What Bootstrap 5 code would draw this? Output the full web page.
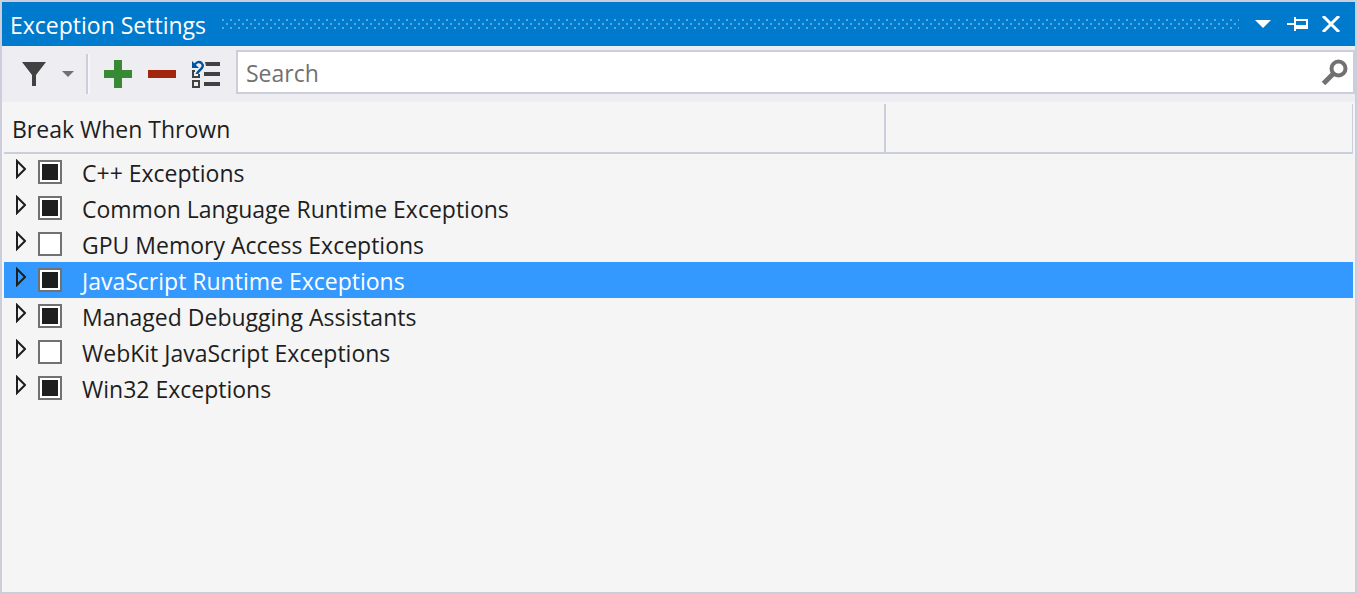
<!DOCTYPE html>
<html lang="en">
<head>
<meta charset="utf-8">
<meta name="viewport" content="width=device-width, initial-scale=1">
<title>Exception Settings</title>
<link href="https://cdn.jsdelivr.net/npm/bootstrap@5.3.0/dist/css/bootstrap.min.css" rel="stylesheet">
<style>
  :root { --line: #cccedb; --ink: #1e1e1e; }
  body { font-family: "Open Sans", "Noto Sans", sans-serif; font-size: 23px; line-height: 36px; color: var(--ink); background: #f5f5f5; }
  svg { display: block; }
  .tool-window { border: 2px solid var(--line); }
  .title-bar { background: #007acc; height: 44px; padding: 0 14px 0 8px; }
  .title-bar h1 { font-size: 23px; line-height: 36px; font-weight: 400; padding-top: 2px; }
  .grip {
    height: 10px; margin: 0 16px;
    --dots: linear-gradient(90deg, #59a9de 2px, transparent 2px);
    background: var(--dots) 0 0 / 8px 2px repeat-x, var(--dots) 4px 4px / 8px 2px repeat-x, var(--dots) 0 8px / 8px 2px repeat-x;
  }
  .icon-btn { border: 0; padding: 0; background: none; }
  .close-btn { margin-left: 12px; }
  .tool-bar { background: #eeeef2; height: 56px; padding: 4px 0 8px 20px; }
  .tool-rule { width: 4px; height: 40px; border-left: 2px solid var(--line); border-right: 2px solid #f6f6f8; margin: 0 14px 0 12px; }
  .search-box { border: 2px solid var(--line); background: #fff; height: 44px; padding: 0 5px 0 8px; margin-left: 16px; }
  .search-box input { border: 0; outline: 0; min-width: 0; padding: 2px 0 0; background: none; color: var(--ink); line-height: 36px; }
  .search-box input::placeholder { color: #717171; opacity: 1; }
  .tree { table-layout: fixed; margin: 0 2px; width: calc(100% - 4px); border-collapse: separate; border-spacing: 0; }
  .tree th { height: 52px; font-weight: 400; padding: 3px 8px 0; border-bottom: 2px solid var(--line); background: linear-gradient(var(--line), var(--line)) right 2px / 2px 50px no-repeat; }
  .tree th:first-child { width: 65.4%; }
  .tree th + th { background-position: right 2px; background-size: 1px 50px; }
  .tree td { padding: 0; }
  .tree tr.selected td { background: #3399ff; color: #fff; }
  .tree-row { height: 36px; padding-left: 12px; }
  .expander { margin: 5px 12px 0 0; }
  .tree-row .form-check-input { width: 24px; height: 24px; margin: 6px 20px 0 0; border: 2px solid #717171; border-radius: 0; background: #fff; box-shadow: none; }
  .tree-row .form-check-input:indeterminate { background: linear-gradient(var(--ink), var(--ink)) center / 16px 16px no-repeat #fff; border-color: #717171; }
  .tree-row label { padding-top: 1px; }
</style>
</head>
<body>
<main class="tool-window min-vh-100 d-flex flex-column">
  <header class="title-bar d-flex align-items-center text-white">
    <h1 class="m-0">Exception Settings</h1>
    <div class="grip flex-grow-1"></div>
    <button class="icon-btn" type="button" aria-label="Window position"><svg width="16" height="8"><path d="M0 0h16L8 8z" fill="#fff"/></svg></button>
    <button class="icon-btn ms-3" type="button" aria-label="Auto hide"><svg width="22" height="14" fill="#fff" shape-rendering="crispEdges"><path d="M-1 6h8V0h2v2h12v10H9v2H7V8H-1zM9 4v4h10V4z" fill-rule="evenodd"/></svg></button>
    <button class="icon-btn close-btn" type="button" aria-label="Close"><svg width="20" height="16"><path d="M2 0l16 16M18 0L2 16" stroke="#fff" stroke-width="3"/></svg></button>
  </header>

  <div class="tool-bar d-flex" role="toolbar" aria-label="Exception settings">
    <div class="d-flex align-items-center pt-1 flex-shrink-0">
      <button class="icon-btn" type="button" aria-label="Filter"><svg width="24" height="24"><path d="M0 0h24L14 13v11h-4V13z" fill="#424242"/></svg></button>
      <button class="icon-btn ms-3" type="button" aria-label="Filter options"><svg width="12" height="6"><path d="M0 0h12L6 6z" fill="#717171"/></svg></button>
      <div class="tool-rule"></div>
      <button class="icon-btn" type="button" aria-label="Add"><svg width="28" height="28"><path d="M10 0h8v10h10v8H18v10h-8V18H0v-8h10z" fill="#388934"/></svg></button>
      <button class="icon-btn ms-3" type="button" aria-label="Delete"><svg width="28" height="8"><path d="M0 0h28v8H0z" fill="#a1260d"/></svg></button>
      <button class="icon-btn ms-3" type="button" aria-label="Restore defaults">
        <svg width="28" height="28" fill="none">
          <path d="M13 2h15v4H14zM12 12h16v4H12zM12 22h16v4H12z" fill="#424242"/>
          <path d="M1 21h6v6H1zM3 11H1v6h6v-3" stroke="#424242" stroke-width="2"/>
          <path d="M2 6C4 2 7 1 9.500 3c2.500 2.500 1 5-1.500 7-1.500 1.300-2.500 2.500-3.500 4.500" stroke="#00539c" stroke-width="2.400"/>
          <path d="M0 1v7h7z" fill="#00539c"/>
          <path d="M3.500 14h2.500v2H3.500z" fill="#f4f8fc"/>
        </svg>
      </button>
    </div>
    <form class="search-box d-flex align-items-center flex-grow-1" role="search">
      <input class="flex-grow-1" type="text" placeholder="Search" aria-label="Search">
      <button class="icon-btn" type="button" aria-label="Run search"><svg width="27" height="27" fill="none" stroke="#717171"><circle cx="17.500" cy="9.500" r="7" stroke-width="4"/><path d="M12.500 14.500L2.500 24.500" stroke-width="5"/></svg></button>
    </form>
  </div>

  <table class="tree">
    <thead><tr><th scope="col">Break When Thrown</th><th scope="col" aria-label="Conditions"></th></tr></thead>
    <tbody id="groups">
      <tr><td colspan="2"><div class="tree-row d-flex align-items-start"><button class="icon-btn expander" type="button" aria-label="Expand"><svg width="10" height="20"><path d="M1 2v16L9 10z" fill="none" stroke="#1e1e1e" stroke-width="2"/></svg></button><input class="form-check-input" type="checkbox" id="cpp" data-partial><label for="cpp">C++ Exceptions</label></div></td></tr>
      <tr><td colspan="2"><div class="tree-row d-flex align-items-start"><button class="icon-btn expander" type="button" aria-label="Expand"><svg width="10" height="20"><path d="M1 2v16L9 10z" fill="none" stroke="#1e1e1e" stroke-width="2"/></svg></button><input class="form-check-input" type="checkbox" id="clr" data-partial><label for="clr">Common Language Runtime Exceptions</label></div></td></tr>
      <tr><td colspan="2"><div class="tree-row d-flex align-items-start"><button class="icon-btn expander" type="button" aria-label="Expand"><svg width="10" height="20"><path d="M1 2v16L9 10z" fill="none" stroke="#1e1e1e" stroke-width="2"/></svg></button><input class="form-check-input" type="checkbox" id="gpu"><label for="gpu">GPU Memory Access Exceptions</label></div></td></tr>
      <tr class="selected"><td colspan="2"><div class="tree-row d-flex align-items-start"><button class="icon-btn expander" type="button" aria-label="Expand"><svg width="10" height="20"><path d="M1 2v16L9 10z" fill="none" stroke="#1e1e1e" stroke-width="2"/></svg></button><input class="form-check-input" type="checkbox" id="js" data-partial><label for="js">JavaScript Runtime Exceptions</label></div></td></tr>
      <tr><td colspan="2"><div class="tree-row d-flex align-items-start"><button class="icon-btn expander" type="button" aria-label="Expand"><svg width="10" height="20"><path d="M1 2v16L9 10z" fill="none" stroke="#1e1e1e" stroke-width="2"/></svg></button><input class="form-check-input" type="checkbox" id="mda" data-partial><label for="mda">Managed Debugging Assistants</label></div></td></tr>
      <tr><td colspan="2"><div class="tree-row d-flex align-items-start"><button class="icon-btn expander" type="button" aria-label="Expand"><svg width="10" height="20"><path d="M1 2v16L9 10z" fill="none" stroke="#1e1e1e" stroke-width="2"/></svg></button><input class="form-check-input" type="checkbox" id="webkit"><label for="webkit">WebKit JavaScript Exceptions</label></div></td></tr>
      <tr><td colspan="2"><div class="tree-row d-flex align-items-start"><button class="icon-btn expander" type="button" aria-label="Expand"><svg width="10" height="20"><path d="M1 2v16L9 10z" fill="none" stroke="#1e1e1e" stroke-width="2"/></svg></button><input class="form-check-input" type="checkbox" id="win32" data-partial><label for="win32">Win32 Exceptions</label></div></td></tr>
    </tbody>
  </table>
</main>
<script src="https://cdn.jsdelivr.net/npm/bootstrap@5.3.0/dist/js/bootstrap.bundle.min.js"></script>
<script>
  // Groups with only some of their exceptions enabled show the partial state
  document.querySelectorAll('[data-partial]').forEach(box => { box.indeterminate = true; });
</script>
</body>
</html>
